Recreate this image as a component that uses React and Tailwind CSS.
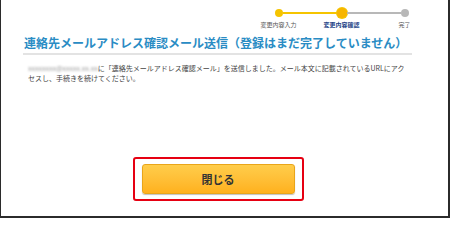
const steps = [
  { label: "変更内容入力", left: null, right: "bg-[#f5c400]", dot: "h-[8px] w-[8px] bg-[#f5c400]", text: "text-[#555]" },
  { label: "変更内容確認", left: "bg-[#f5c400]", right: "bg-[#b8b8b8]", dot: "h-[10px] w-[10px] bg-[#f7b500] shadow-[0_0_0_1px_#f5c400]", text: "font-bold text-[#1b3f86]" },
  { label: "完了", left: "bg-[#b8b8b8]", right: null, dot: "h-[8px] w-[8px] bg-[#b8b8b8]", text: "text-[#555]" },
];

function Progress() {
  return (
    <div className="flex justify-end pr-[12px] pt-[8px]">
      {steps.map((s) => (
        <div key={s.label} className="flex w-[63px] flex-col items-center">
          <div className="flex h-[10px] w-full items-center">
            <div className={`h-[2px] flex-1 ${s.left || ""}`} />
            <div className={`shrink-0 rounded-full ${s.dot}`} />
            <div className={`h-[2px] flex-1 ${s.right || ""}`} />
          </div>
          <p className={`mt-[3px] whitespace-nowrap text-[6px] leading-[8px] ${s.text}`}>{s.label}</p>
        </div>
      ))}
    </div>
  );
}

export default function App() {
  return (
    <div
      className="flex h-[218px] w-[450px] flex-col border-b-2 border-l border-r-2 border-[#2b2b2b] bg-white"
      style={{ fontFamily: '"Noto Sans CJK JP", "Noto Sans", sans-serif' }}
    >
      <Progress />

      <div className="ml-[22px] mr-[36px] mt-[6px] border-b-2 border-[#e3e3e3] pb-[2px]">
        <h1 className="whitespace-nowrap pl-[1px] text-[12px] font-bold leading-[16px] text-[#2a8cc4]">
          連絡先メールアドレス確認メール送信（登録はまだ完了していません）
        </h1>
      </div>

      <div className="ml-[27px] mt-[8px] text-[7px] leading-[10px] text-[#444]">
        <p className="whitespace-nowrap">
          <span className="inline-block text-[#999] blur-[1px]">xxxxxxxx@xxxxx.xx.xx</span>
          に「連絡先メールアドレス確認メール」を送信しました。メール本文に記載されているURLにアク
          <br />
          セスし、手続きを続けてください。
        </p>
      </div>

      <div className="mt-auto mb-[15px] flex justify-center">
        <div className="ml-[-13px] rounded-[3px] border-2 border-[#e60012] px-[7px] py-[5px]">
          <button
            type="button"
            className="flex h-[30px] w-[153px] items-center justify-center rounded-[3px] border border-[#e9a51a] bg-gradient-to-b from-[#ffcd4a] to-[#ffb11c] text-[11px] font-bold text-[#333] shadow-[0_1px_1px_rgba(0,0,0,0.25)]"
          >
            閉じる
          </button>
        </div>
      </div>
    </div>
  );
}
